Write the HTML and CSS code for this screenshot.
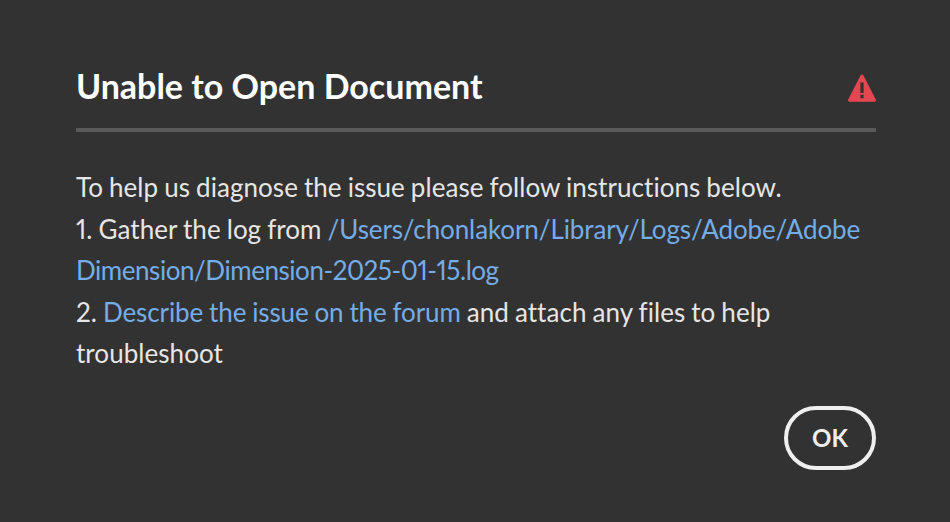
FILE: index.html
```html
<!DOCTYPE html>
<html lang="en">
<head>
    <meta charset="UTF-8">
    <title>Unable to Open Document</title>
    <link rel="stylesheet" href="styles.css">
</head>
<body>
    <div class="dialog">
        <div class="head">
            <h1 class="title">Unable to Open Document</h1>
            <svg class="alert" width="28" height="28" viewBox="0 0 28 28">
                <path fill="#e34850" fill-rule="evenodd" d="M12.6 1.2c.6-1.1 2.200-1.100 2.800 0l12.400 24.300c.5 1-.2 2.300-1.400 2.300H1.600c-1.200 0-1.900-1.300-1.400-2.300zM12.400 8.500v10.500h3.200V8.500zM12.400 20.800v3.400h3.200v-3.400z"/>
            </svg>
        </div>
        <div class="message">
            <p>To help us diagnose the issue please follow instructions below.</p>
            <p>1. Gather the log from <a href="#">/Users/chonlakorn/Library/Logs/Adobe/Adobe</a></p>
            <p><a class="tight" href="#">Dimension/Dimension-2025-01-15.log</a></p>
            <p>2. <a href="#">Describe the issue on the forum</a> and attach any files to help</p>
            <p>troubleshoot</p>
        </div>
        <div class="actions">
            <button class="ok">OK</button>
        </div>
    </div>
</body>
</html>
```

FILE: styles.css
```css
html, body{
    margin: 0;
    height: 100%;
}
body{
    background-color: #323232;
    font-family: "Lato", "Open Sans", sans-serif;
}
.dialog{
    display: flex;
    flex-direction: column;
    height: 522px;
    box-sizing: border-box;
    padding: 48px 74px 0 76px;
}
.head{
    display: flex;
    justify-content: space-between;
    align-items: center;
    height: 80px;
    border-bottom: 4px solid #5a5a5a;
}
.title{
    margin: 0 0 4px;
    font-size: 34px;
    line-height: 74px;
    font-weight: 700;
    color: #fff;
}
.message{
    margin-top: 35px;
    font-size: 26px;
    line-height: 41.500px;
    color: #e6e6e6;
    white-space: nowrap;
    word-spacing: -0.7px;
    letter-spacing: 0.05px;
    font-variant-numeric: proportional-nums;
}
.message p{
    margin: 0;
}
.message a{
    color: #74ade8;
    text-decoration: none;
    letter-spacing: -0.1px;
}
.message a.tight{
    letter-spacing: -0.45px;
}
.actions{
    display: flex;
    justify-content: flex-end;
    margin-top: 31px;
}
.ok{
    width: 92px;
    height: 64px;
    box-sizing: border-box;
    border: 4px solid #efefef;
    border-radius: 32px;
    background: none;
    color: #efefef;
    font-family: inherit;
    font-size: 24px;
    font-weight: 700;
    padding: 0;
}
```
